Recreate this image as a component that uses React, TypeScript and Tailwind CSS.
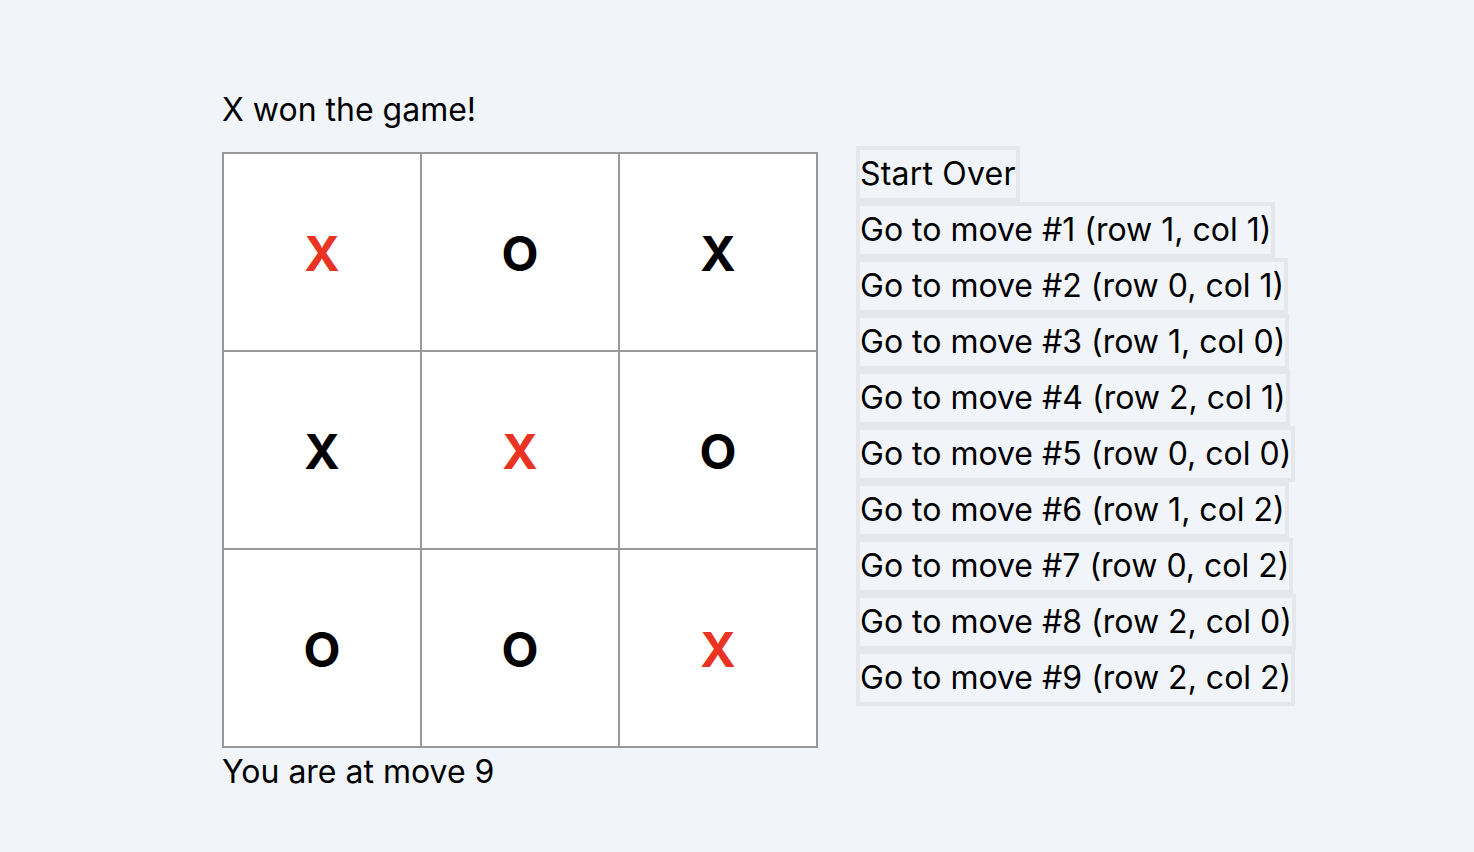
import React from 'react';

const squares = ['X', 'O', 'X', 'X', 'X', 'O', 'O', 'O', 'X'];
const winLine = [0, 4, 8];

const moves = [
  '(row 1, col 1)',
  '(row 0, col 1)',
  '(row 1, col 0)',
  '(row 2, col 1)',
  '(row 0, col 0)',
  '(row 1, col 2)',
  '(row 0, col 2)',
  '(row 2, col 0)',
  '(row 2, col 2)'
];

export default function App() {
  return (
    <div
      className="min-h-screen bg-[#f1f5f9] text-black pl-[222px] pt-[86px]"
      style={{ fontFamily: 'Inter, "Liberation Sans", sans-serif' }}
    >
      {/* Status */}
      <div className="text-[32px] leading-[48px]">X won the game!</div>

      <div className="flex items-start gap-[38px] mt-[12px]">
        <div className="mt-[6px]">
          {/* Board */}
          <div className="grid grid-cols-3 w-fit border border-[#999] bg-white">
            {squares.map((v, i) => (
              <div
                key={i}
                className={
                  'w-[198px] h-[198px] border border-[#999] flex items-center justify-center pt-[4px] text-[48px] font-bold ' +
                  (winLine.includes(i) ? 'text-[#ea3323]' : 'text-black')
                }
              >
                {v}
              </div>
            ))}
          </div>
          <div className="text-[32px] leading-[48px]">You are at move 9</div>
        </div>

        {/* History */}
        <ol className="flex flex-col items-start">
          <li>
            <button className="border-4 border-[#e5e7eb] bg-[#f1f5f9] text-[32px] leading-[48px] tracking-[0.2px]">
              Start Over
            </button>
          </li>
          {moves.map((m, i) => (
            <li key={i}>
              <button className="border-4 border-[#e5e7eb] bg-[#f1f5f9] text-[32px] leading-[48px]">
                Go to move #{i + 1} {m}
              </button>
            </li>
          ))}
        </ol>
      </div>
    </div>
  );
}
